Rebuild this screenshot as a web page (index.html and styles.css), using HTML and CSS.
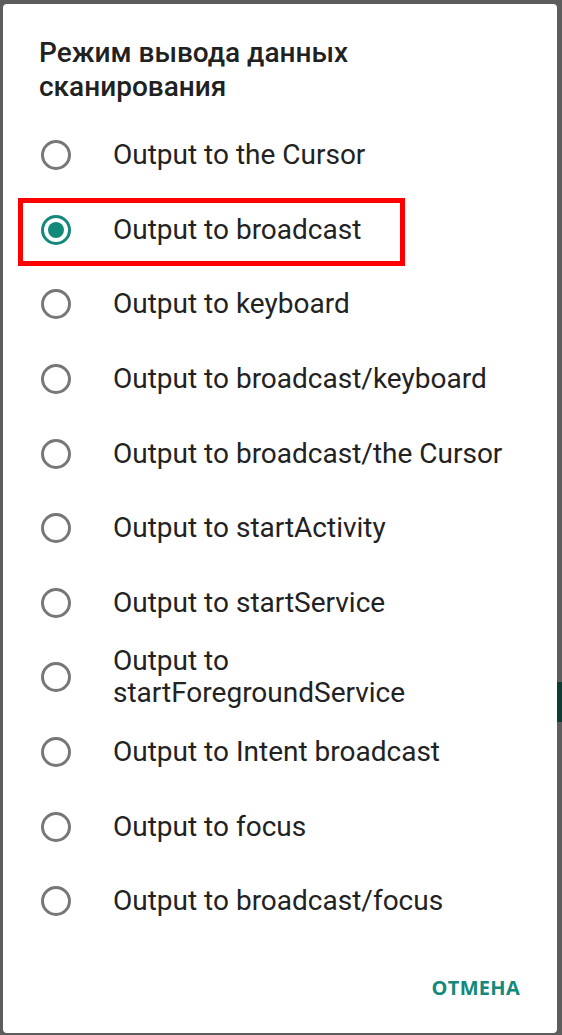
FILE: index.html
```html
<!DOCTYPE html>
<html lang="ru">
<head>
<meta charset="utf-8">
<link rel="stylesheet" href="styles.css">
</head>
<body>
<div class="backdrop-strip"></div>
<div class="dialog">
  <h1 class="title">Режим вывода данных сканирования</h1>
  <ul class="options">
    <li class="option"><span class="radio"></span><span class="label">Output to the Cursor</span></li>
    <li class="option checked"><span class="radio"></span><span class="label">Output to broadcast</span><span class="highlight"></span></li>
    <li class="option"><span class="radio"></span><span class="label">Output to keyboard</span></li>
    <li class="option"><span class="radio"></span><span class="label">Output to broadcast/keyboard</span></li>
    <li class="option"><span class="radio"></span><span class="label">Output to broadcast/the Cursor</span></li>
    <li class="option"><span class="radio"></span><span class="label">Output to startActivity</span></li>
    <li class="option"><span class="radio"></span><span class="label">Output to startService</span></li>
    <li class="option"><span class="radio"></span><span class="label">Output to startForegroundService</span></li>
    <li class="option"><span class="radio"></span><span class="label">Output to Intent broadcast</span></li>
    <li class="option"><span class="radio"></span><span class="label">Output to focus</span></li>
    <li class="option"><span class="radio"></span><span class="label">Output to broadcast/focus</span></li>
  </ul>
  <div class="actions"><button class="btn">ОТМЕНА</button></div>
</div>
</body>
</html>
```

FILE: styles.css
```css
html, body {
  margin: 0;
  padding: 0;
}
body {
  background: #5d5d5d;
  width: 562px;
  height: 1035px;
  overflow: hidden;
  position: relative;
  font-family: Roboto, "Noto Sans", sans-serif;
  padding: 4px 5px 0 3px;
  box-sizing: border-box;
}
.backdrop-strip {
  position: absolute;
  right: 0;
  top: 682px;
  width: 5px;
  height: 40px;
  background: #0f3b34;
}
.dialog {
  background: #ffffff;
  border-radius: 4px;
  height: 1029px;
  box-sizing: border-box;
  padding: 32px 0 0 0;
  display: flex;
  flex-direction: column;
}
.title {
  margin: 0;
  padding: 0 60px 0 36px;
  font-size: 28px;
  font-weight: 500;
  line-height: 34px;
  color: #212121;
}
.options {
  list-style: none;
  margin: 14px 0 0 0;
  padding: 0;
}
.option {
  position: relative;
  height: 74.6px;
  display: flex;
  align-items: center;
  padding: 0 40px 0 38px;
}
.radio {
  flex: none;
  width: 30px;
  height: 30px;
  box-sizing: border-box;
  border: 3px solid #777777;
  border-radius: 50%;
  margin-right: 42px;
  position: relative;
}
.checked .radio {
  border-color: #13897a;
}
.checked .radio::after {
  content: "";
  position: absolute;
  left: 4px;
  top: 4px;
  width: 16px;
  height: 16px;
  border-radius: 50%;
  background: #13897a;
}
.label {
  font-size: 28px;
  line-height: 32px;
  color: #222222;
}
.highlight {
  position: absolute;
  left: 15px;
  top: 5px;
  width: 387px;
  height: 68px;
  box-sizing: border-box;
  border: 5px solid #ff0000;
}
.actions {
  display: flex;
  justify-content: flex-end;
  padding: 35px 37px 0 0;
}
.btn {
  background: none;
  border: none;
  padding: 0;
  font-family: "Open Sans", Roboto, sans-serif;
  font-weight: 700;
  font-size: 20px;
  letter-spacing: 0.3px;
  color: #13897a;
  line-height: 28px;
}
```
